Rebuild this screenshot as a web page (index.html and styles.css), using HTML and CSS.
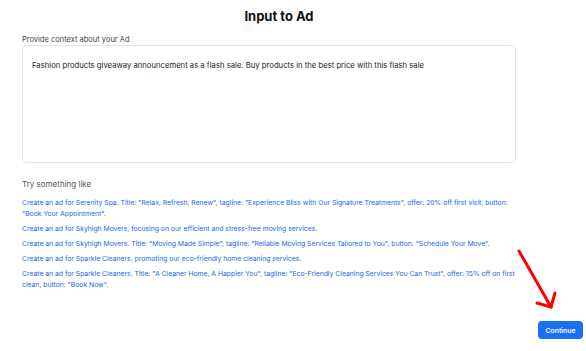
FILE: index.html
```html
<!DOCTYPE html>
<html>
<head>
<meta charset="utf-8">
<link rel="stylesheet" href="styles.css">
</head>
<body>
<div class="page">
  <h1 class="title">Input to Ad</h1>
  <div class="content">
    <label class="label">Provide context about your Ad</label>
    <div class="textbox">Fashion products giveaway announcement as a flash sale. Buy products in the best price with this flash sale</div>
    <div class="try">Try something like</div>
    <ul class="suggestions">
      <li>Create an ad for Serenity Spa. Title: "Relax, Refresh, Renew", tagline: "Experience Bliss with Our Signature Treatments", offer: 20% off first visit, button: "Book Your Appointment".</li>
      <li>Create an ad for Skyhigh Movers, focusing on our efficient and stress-free moving services.</li>
      <li>Create an ad for Skyhigh Movers. Title: "Moving Made Simple", tagline: "Reliable Moving Services Tailored to You", button: "Schedule Your Move".</li>
      <li>Create an ad for Sparkle Cleaners, promoting our eco-friendly home cleaning services.</li>
      <li>Create an ad for Sparkle Cleaners. Title: "A Cleaner Home, A Happier You", tagline: "Eco-Friendly Cleaning Services You Can Trust", offer: 15% off on first clean, button: "Book Now".</li>
    </ul>
  </div>
  <div class="footer">
    <button class="continue">Continue</button>
  </div>
  <svg class="arrow" width="586" height="351" viewBox="0 0 586 351">
    <path d="M519 251 L551 307" stroke="#ff0000" stroke-width="3" fill="none" stroke-linecap="round"/>
    <path d="M537 303 L551 307 L555 293" stroke="#ff0000" stroke-width="3" fill="none" stroke-linecap="round" stroke-linejoin="round"/>
  </svg>
</div>
</body>
</html>
```

FILE: styles.css
```css
* { box-sizing: border-box; }
html, body { margin: 0; padding: 0; background: #fff; }
body { font-family: Inter, "Noto Sans", sans-serif; }
.page { position: relative; width: 586px; height: 351px; display: flex; flex-direction: column; }
.title { margin: 8px 28px 0 0; font-size: 13px; line-height: 16px; font-weight: 700; text-align: center; color: #111; }
.content { margin-left: 22px; width: 494px; display: flex; flex-direction: column; }
.label { margin-top: 11px; font-size: 7.5px; line-height: 10px; color: #444; }
.textbox { height: 118px; border: 1px solid #e4e4e4; border-radius: 5px; padding: 14px 9px; font-size: 7.7px; line-height: 12px; color: #222; }
.try { margin-top: 16px; font-size: 8px; line-height: 10px; color: #555; }
.suggestions { list-style: none; margin: 8px 0 0; padding: 0; display: flex; flex-direction: column; gap: 4px; }
.suggestions li { font-size: 6.8px; line-height: 11px; color: #2266e6; }
.footer { margin-top: auto; display: flex; justify-content: flex-end; padding: 0 3px 12px 0; }
.continue { width: 45px; height: 18px; border: none; border-radius: 4px; background: #1a6ff2; color: #fff; font-family: Inter, sans-serif; font-size: 6.8px; font-weight: 600; padding: 0; }
.arrow { position: absolute; left: 0; top: 0; pointer-events: none; }
```
